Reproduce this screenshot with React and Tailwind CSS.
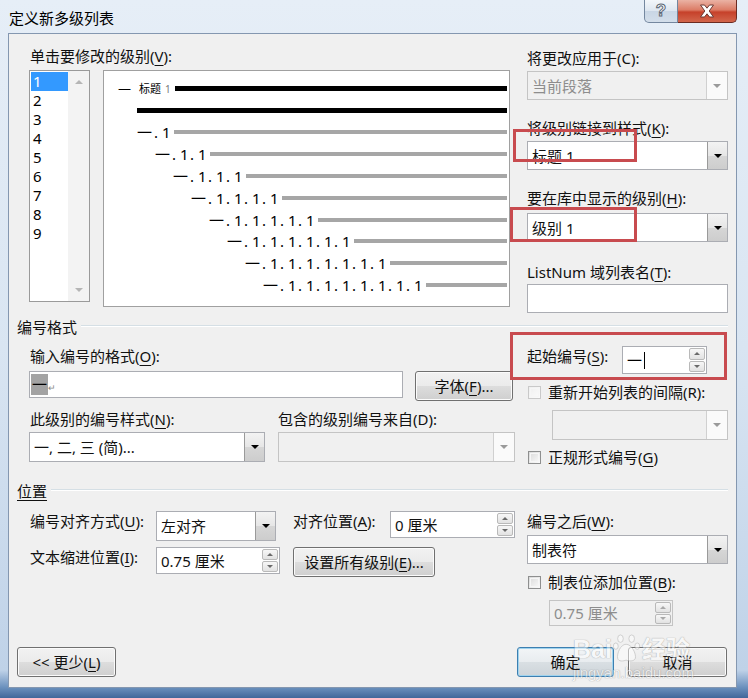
import React from "react";

const F = "font-['Noto_Sans','Noto_Sans_CJK_SC',sans-serif]";

function U({ children }) {
  return <span className="underline decoration-1 underline-offset-[3px]">{children}</span>;
}

function TriDown({ gray }) {
  return (
    <div
      className={
        gray
          ? "w-0 h-0 border-x-[4px] border-x-transparent border-t-[4px] border-t-[#9a9a9a]"
          : "w-0 h-0 border-x-[4px] border-x-transparent border-t-[4px] border-t-black"
      }
    />
  );
}

function Combo({ size, text, disabled }) {
  return (
    <div
      className={`flex ${size} border ${
        disabled ? "border-[#c4c4c4] bg-[#f0f0f0]" : "border-[#abadb3] bg-white"
      }`}
    >
      <div
        className={`flex-1 flex items-center pl-[4px] text-[15px] leading-[20px] whitespace-nowrap ${
          disabled ? "text-[#8d8d8d]" : "text-[#111]"
        }`}
      >
        {text}
      </div>
      {disabled ? (
        <div className="w-[21px] border-l border-[#d0d0d0] bg-[#fafafa] flex items-center justify-center">
          <TriDown gray />
        </div>
      ) : (
        <div className="w-[20px] border-l border-[#9a9a9a] bg-[linear-gradient(180deg,#f3f3f3_0%,#e6e6e6_50%,#d6d6d6_51%,#cdcdcd_100%)] flex items-center justify-center">
          <TriDown />
        </div>
      )}
    </div>
  );
}

function Spin({ size, children, disabled }) {
  return (
    <div
      className={`flex ${size} border ${
        disabled ? "border-[#c4c4c4] bg-[#f0f0f0]" : "border-[#abadb3] bg-white"
      }`}
    >
      <div
        className={`flex-1 flex items-center pl-[4px] text-[15px] leading-[20px] whitespace-nowrap ${
          disabled ? "text-[#8d8d8d]" : "text-[#111]"
        }`}
      >
        {children}
      </div>
      <div className="w-[18px] flex flex-col p-[1px] gap-px">
        <div className="flex-1 border border-[#b9b9b9] rounded-[2px] bg-[linear-gradient(180deg,#f7f7f7,#e2e2e2)] flex items-center justify-center">
          <div
            className={
              disabled
                ? "w-0 h-0 border-x-[3px] border-x-transparent border-b-[3px] border-b-[#a8a8a8]"
                : "w-0 h-0 border-x-[3px] border-x-transparent border-b-[3px] border-b-[#6a6a6a]"
            }
          />
        </div>
        <div className="flex-1 border border-[#b9b9b9] rounded-[2px] bg-[linear-gradient(180deg,#f7f7f7,#e2e2e2)] flex items-center justify-center">
          <div
            className={
              disabled
                ? "w-0 h-0 border-x-[3px] border-x-transparent border-t-[3px] border-t-[#a8a8a8]"
                : "w-0 h-0 border-x-[3px] border-x-transparent border-t-[3px] border-t-[#6a6a6a]"
            }
          />
        </div>
      </div>
    </div>
  );
}

function Check({ disabled }) {
  return (
    <div
      className={`w-[13px] h-[13px] border p-px ${
        disabled
          ? "border-[#c9c9c9] bg-[linear-gradient(135deg,#efefef,#fbfbfb)]"
          : "border-[#8e8f8f] bg-[linear-gradient(135deg,#d9d9d9,#fbfbfb)]"
      }`}
    >
      <div className="w-full h-full border border-[#f6f6f6]" />
    </div>
  );
}

function Btn({ size, children, def }) {
  return (
    <div
      className={`flex items-center justify-center ${size} border rounded-[3px] text-[15px] leading-[20px] text-[#111] ${
        def
          ? "border-[#3c7fb1] shadow-[inset_0_0_0_1px_#9fd3ee] bg-[linear-gradient(180deg,#f2f5f7_0%,#e8ecef_50%,#d9dfe3_51%,#cdd4d9_100%)]"
          : "border-[#707070] shadow-[inset_0_0_0_1px_#fbfbfb] bg-[linear-gradient(180deg,#f2f2f2_0%,#ebebeb_50%,#dddddd_51%,#cfcfcf_100%)]"
      }`}
    >
      {children}
    </div>
  );
}

function Label({ children, className = "" }) {
  return (
    <div className={`h-[20px] text-[15px] leading-[20px] whitespace-nowrap text-[#111] ${className}`}>
      {children}
    </div>
  );
}

function GroupHeader({ children }) {
  return (
    <div className="flex items-center ml-[8px] mr-[8px] h-[20px]">
      <div className="text-[15px] leading-[20px] text-[#111] whitespace-nowrap">{children}</div>
      <div className="flex-1 ml-[4px] mt-[-2px] h-[2px] border-t border-t-[#d5dfe5] border-b border-b-white" />
    </div>
  );
}

const seg = (n) =>
  Array.from({ length: n }).map((_, k) => (
    <span key={k} className="inline-block w-[18px] pl-[2px] whitespace-pre">
      {". 1"}
    </span>
  ));

function Preview() {
  const rows = [3, 4, 5, 6, 7, 8, 9, 10];
  return (
    <div className="ml-[13px] w-[407px] h-[237px] border border-[#a0a0a0] bg-white pt-[7px] pr-[2px] text-[15px] leading-[20px] text-black">
      <div className="h-[21.8px] flex items-center pl-[14px]">
        <span className="text-[13px] w-[16px]">一</span>
        <span className="text-[11px] ml-[5px]">标题</span>
        <span className="text-[10px] ml-[4px] text-[#777]">1</span>
        <div className="flex-1 ml-[4px] h-[5px] bg-black" />
      </div>
      <div className="h-[21.8px] flex items-center pl-[33px]">
        <div className="flex-1 h-[5px] bg-black" />
      </div>
      {rows.map((i) => (
        <div key={i} className="h-[21.8px] flex items-center" style={{ paddingLeft: 33 + 18 * (i - 3) }}>
          <span className="inline-block w-[15px]">一</span>
          {seg(i - 2)}
          <div className="flex-1 ml-[4px] h-[4px] bg-[#a6a6a6]" />
        </div>
      ))}
    </div>
  );
}

function LevelList() {
  const items = ["1", "2", "3", "4", "5", "6", "7", "8", "9"];
  return (
    <div className="w-[61px] h-[232px] border border-[#9a9a9a] bg-white flex">
      <div className="flex-1 pt-px pl-px">
        {items.map((t, i) => (
          <div
            key={t}
            className={`h-[19px] pl-[2px] text-[15px] leading-[19px] ${
              i === 0 ? "bg-[#3399ff] text-white" : "text-black"
            }`}
          >
            {t}
          </div>
        ))}
      </div>
      <div className="w-[21px] bg-[#f3f3f3] flex flex-col justify-between items-center py-[9px]">
        <div className="w-0 h-0 border-x-[4px] border-x-transparent border-b-[4px] border-b-[#b5b5b5]" />
        <div className="w-0 h-0 border-x-[4px] border-x-transparent border-t-[4px] border-t-[#b5b5b5]" />
      </div>
    </div>
  );
}

export default function App() {
  return (
    <div
      className={`${F} relative w-[748px] h-[698px] overflow-hidden bg-[linear-gradient(180deg,#e6eef7_0%,#d9e5f2_50%,#bfd2e8_96%,#6a90bd_98.5%,#40679a_100%)] flex flex-col`}
    >
      {/* title bar */}
      <div className="h-[33px] flex items-start">
        <div className="pl-[9px] pt-[8px] text-[15px] leading-[20px] text-black">定义新多级列表</div>
        <div className="ml-auto mr-[11px] flex h-[23px]">
          <div className="w-[34px] h-full border border-t-0 border-[#74879f] rounded-bl-[5px] bg-[linear-gradient(180deg,#f3f6fa_0%,#dde6f0_50%,#c9d6e5_51%,#d3deea_100%)] flex items-center justify-center">
            <span className="text-[17px] leading-[20px] font-bold text-white [-webkit-text-stroke:1px_#5a6675] font-['Liberation_Sans',sans-serif]">
              ?
            </span>
          </div>
          <div className="w-[59px] h-full border border-t-0 border-l-0 border-[#6b2b22] rounded-br-[5px] bg-[linear-gradient(180deg,#eab2a4_0%,#dc7c66_45%,#c6412a_55%,#d2664c_100%)] flex items-center justify-center">
            <svg width="16" height="14" viewBox="0 0 16 14">
              <path
                d="M1.5 1 H5.5 L8 4.2 L10.5 1 H14.5 L10.2 7 L14.5 13 H10.5 L8 9.8 L5.5 13 H1.5 L5.8 7 Z"
                fill="#fff"
                stroke="#6a3a34"
                strokeWidth="1"
                strokeLinejoin="round"
              />
            </svg>
          </div>
        </div>
      </div>

      {/* client */}
      <div className="ml-[8px] w-[729px] h-[655px] border border-[#8497b0] bg-[#f0f0f0] flex flex-col">
        {/* top section */}
        <div className="flex mt-[12px]">
          <div className="ml-[20px] w-[481px] flex flex-col">
            <Label className="pl-px">
              单击要修改的级别(<U>V</U>):
            </Label>
            <div className="mt-[4px] flex items-start">
              <LevelList />
              <Preview />
            </div>
          </div>
          <div className="ml-[17px] w-[201px] flex flex-col pt-[2px]">
            <Label className="text-[#8d8d8d]">将更改应用于(C):</Label>
            <div className="mt-[3px]">
              <Combo size="w-[201px] h-[29px]" text="当前段落" disabled />
            </div>
            <Label className="mt-[18px]">
              将级别链接到样式(<U>K</U>):
            </Label>
            <div className="mt-[3px]">
              <Combo size="w-[201px] h-[29px]" text="标题 1" />
            </div>
            <Label className="mt-[18px]">
              要在库中显示的级别(<U>H</U>):
            </Label>
            <div className="mt-[5px]">
              <Combo size="w-[201px] h-[29px]" text="级别 1" />
            </div>
            <Label className="mt-[20px]">
              ListNum 域列表名(<U>T</U>):
            </Label>
            <div className="mt-[2px] w-[201px] h-[29px] border border-[#abadb3] bg-white" />
          </div>
        </div>

        {/* 编号格式 */}
        <div className="mt-[4px]">
          <GroupHeader>编号格式</GroupHeader>
        </div>
        <div className="flex mt-[9px]">
          <div className="ml-[20px] w-[486px] flex flex-col">
            <Label className="pl-px">
              输入编号的格式(<U>O</U>):
            </Label>
            <div className="mt-[5px] flex items-start">
              <div className="w-[374px] h-[27px] border border-[#abadb3] bg-white flex items-center pl-px">
                <span className="bg-[#a3a3a3] text-[15px] leading-[21px] text-black px-[1px]">一</span>
                <span className="text-[9px] leading-[9px] text-[#8a8a8a] mt-[6px]">↵</span>
              </div>
              <div className="ml-[12px]">
                <Btn size="w-[98px] h-[30px]">
                  字体(<U>F</U>)...
                </Btn>
              </div>
            </div>
            <div className="mt-[8px] flex">
              <Label className="pl-px w-[249px]">
                此级别的编号样式(<U>N</U>):
              </Label>
              <Label className="text-[#8d8d8d]">包含的级别编号来自(D):</Label>
            </div>
            <div className="mt-[3px] flex">
              <Combo size="w-[236px] h-[30px]" text="一, 二, 三 (简)..." />
              <div className="ml-[13px]">
                <Combo size="w-[237px] h-[30px]" text="" disabled />
              </div>
            </div>
          </div>
          <div className="ml-[12px] w-[201px] flex flex-col">
            <div className="flex items-start h-[28px]">
              <Label className="w-[95px]">
                起始编号(<U>S</U>):
              </Label>
              <Spin size="w-[85px] h-[28px]">
                <span className="text-black">一</span>
                <span className="ml-[2px] w-px h-[17px] bg-black" />
              </Spin>
            </div>
            <div className="mt-[8px] flex items-center h-[20px]">
              <div className="ml-px">
                <Check disabled />
              </div>
              <Label className="ml-[7px] text-[#8d8d8d]">重新开始列表的间隔(R):</Label>
            </div>
            <div className="mt-[8px] ml-[25px]">
              <Combo size="w-[176px] h-[30px]" text="" disabled />
            </div>
            <div className="mt-[7px] flex items-center h-[20px]">
              <div className="ml-px">
                <Check />
              </div>
              <Label className="ml-[7px]">
                正规形式编号(<U>G</U>)
              </Label>
            </div>
          </div>
        </div>

        {/* 位置 */}
        <div className="mt-[14px]">
          <GroupHeader>
            <U>位置</U>
          </GroupHeader>
        </div>
        <div className="flex mt-[10px]">
          <div className="ml-[20px] w-[486px] flex flex-col">
            <div className="flex items-start">
              <Label className="pl-px w-[127px]">
                编号对齐方式(<U>U</U>):
              </Label>
              <Combo size="w-[120px] h-[30px]" text="左对齐" />
              <Label className="ml-[17px] w-[97px]">
                对齐位置(<U>A</U>):
              </Label>
              <Spin size="w-[125px] h-[27px]">0 厘米</Spin>
            </div>
            <div className="mt-[6px] flex items-start">
              <Label className="pl-px w-[127px]">
                文本缩进位置(<U>I</U>):
              </Label>
              <Spin size="w-[124px] h-[27px]">0.75 厘米</Spin>
              <div className="ml-[13px]">
                <Btn size="w-[142px] h-[30px]">
                  设置所有级别(<U>E</U>)...
                </Btn>
              </div>
            </div>
          </div>
          <div className="ml-[12px] w-[201px] flex flex-col">
            <Label>
              编号之后(<U>W</U>):
            </Label>
            <div className="mt-[4px]">
              <Combo size="w-[201px] h-[29px]" text="制表符" />
            </div>
            <div className="mt-[8px] flex items-center h-[20px]">
              <div className="ml-px">
                <Check />
              </div>
              <Label className="ml-[7px]">
                制表位添加位置(<U>B</U>):
              </Label>
            </div>
            <div className="mt-[8px] ml-[22px]">
              <Spin size="w-[124px] h-[26px]" disabled>
                0.75 厘米
              </Spin>
            </div>
          </div>
        </div>

        {/* buttons */}
        <div className="mt-auto mb-[10px] flex">
          <div className="ml-[8px]">
            <Btn size="w-[99px] h-[30px]">
              &lt;&lt; 更少(<U>L</U>)
            </Btn>
          </div>
          <div className="ml-auto">
            <Btn size="w-[97px] h-[30px]" def>
              确定
            </Btn>
          </div>
          <div className="ml-[14px] mr-[9px]">
            <Btn size="w-[99px] h-[30px]">取消</Btn>
          </div>
        </div>
      </div>

      {/* red annotation boxes */}
      <div className="absolute left-[513px] top-[129px] w-[124px] h-[33px] border-[3px] border-[#c84b4f]" />
      <div className="absolute left-[510px] top-[207px] w-[127px] h-[35px] border-[3px] border-[#c84b4f]" />
      <div className="absolute left-[510px] top-[332px] w-[217px] h-[48px] border-[3px] border-[#c84b4f]" />

      {/* watermark */}
      <div className="absolute left-[573px] top-[633px] opacity-50 pointer-events-none text-white [text-shadow:0_0_1px_#777,0_0_1px_#777]">
        <div className="flex items-end h-[30px]">
          <span className="text-[25px] leading-[28px] font-bold font-['Liberation_Sans',sans-serif]">Bai</span>
          <svg width="28" height="30" viewBox="0 0 30 32" className="mx-[1px]">
            <g fill="#fff" stroke="#999" strokeWidth="0.8">
              <ellipse cx="8" cy="6" rx="3" ry="4" />
              <ellipse cx="20" cy="6" rx="3" ry="4" />
              <ellipse cx="3" cy="14" rx="2.6" ry="3.4" />
              <ellipse cx="26" cy="14" rx="2.6" ry="3.4" />
              <path d="M14 12 C8 12 4 22 5 27 C6 31 11 30 14 29 C17 30 22 31 24 27 C25 22 20 12 14 12 Z" />
            </g>
          </svg>
          <span className="text-[24px] leading-[28px] font-bold">经验</span>
        </div>
        <div className="text-[15px] leading-[16px] mt-[2px] font-['Liberation_Sans',sans-serif]">jingyan.baidu.com</div>
      </div>
    </div>
  );
}
